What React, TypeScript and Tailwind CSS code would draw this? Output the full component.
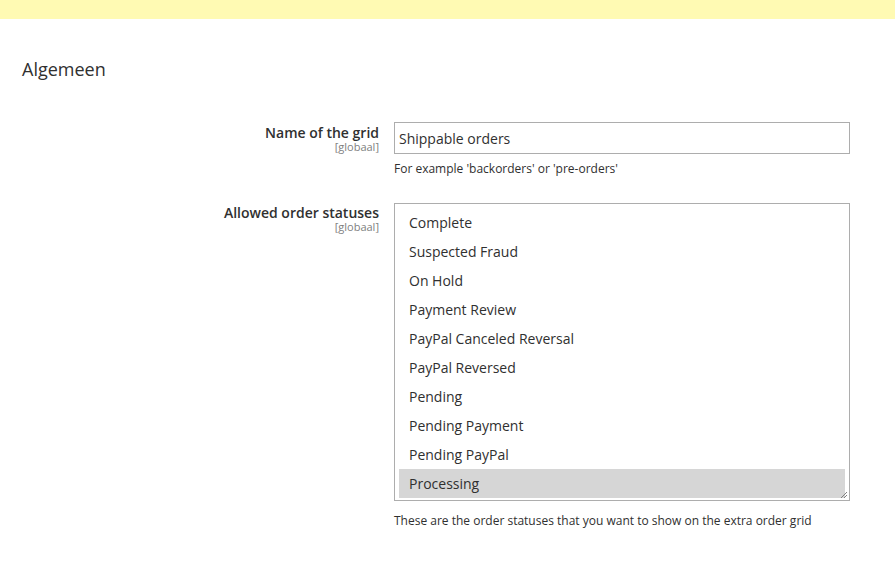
import React from "react";

const options = [
  "Complete",
  "Suspected Fraud",
  "On Hold",
  "Payment Review",
  "PayPal Canceled Reversal",
  "PayPal Reversed",
  "Pending",
  "Pending Payment",
  "Pending PayPal",
  "Processing",
];

export default function App() {
  return (
    <div className="w-[895px] h-[576px] bg-white text-[#303030] overflow-hidden" style={{ fontFamily: '"Open Sans", "Noto Sans", sans-serif' }}>
      <div className="h-[19px] bg-[#fffab3]" />
      <div className="pl-[22px] pt-[38px] text-[18px] leading-[24px]">Algemeen</div>
      <div className="mt-[41px] grid grid-cols-[379px_456px] gap-x-[15px]">
        <div className="flex flex-col items-end pt-[3px]">
          <div className="text-[14px] font-semibold leading-[16px]">Name of the grid</div>
          <div className="text-[11px] leading-[12px] text-[#808080]">[globaal]</div>
        </div>
        <div className="flex flex-col">
          <div className="h-[32px] border border-[#adadad] flex items-center pl-[4px] text-[14px]">Shippable orders</div>
          <div className="mt-[6px] text-[12px] leading-[17px]">For example 'backorders' or 'pre-orders'</div>
        </div>
        <div className="mt-[26px] flex flex-col items-end pt-[2px]">
          <div className="text-[14px] font-semibold leading-[16px]">Allowed order statuses</div>
          <div className="text-[11px] leading-[12px] text-[#808080]">[globaal]</div>
        </div>
        <div className="mt-[26px] flex flex-col">
          <div className="relative h-[298px] border border-[#adadad] pt-[4px] px-[4px] overflow-hidden">
            {options.map((o, i) => (
              <div
                key={o}
                className={
                  "h-[29px] flex items-center pl-[10px] text-[14px] " +
                  (i === options.length - 1 ? "bg-[#d6d6d6]" : "")
                }
              >
                {o}
              </div>
            ))}
            <svg className="absolute right-[1px] bottom-[1px]" width="8" height="8" viewBox="0 0 8 8">
              <path d="M1 7 L7 1 M4 7 L7 4" stroke="#808080" strokeWidth="1" />
            </svg>
          </div>
          <div className="mt-[11px] text-[12px] leading-[17px]">These are the order statuses that you want to show on the extra order grid</div>
        </div>
      </div>
    </div>
  );
}
